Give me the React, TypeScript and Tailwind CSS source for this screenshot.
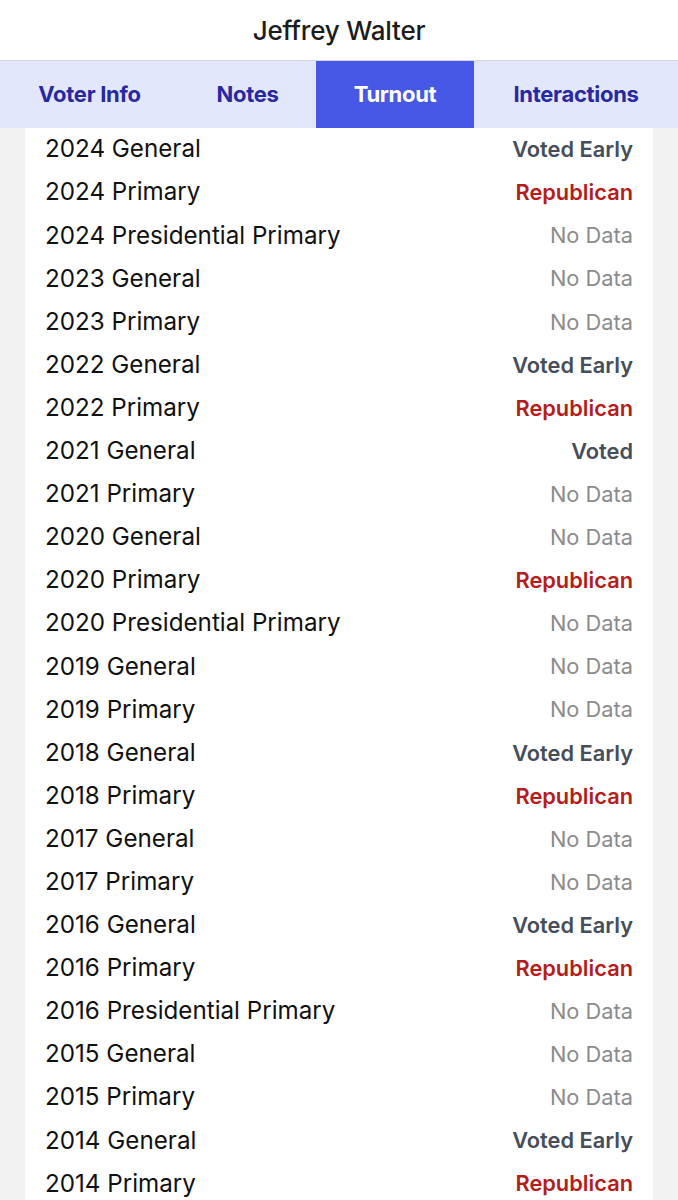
import React from 'react';

type Status = 'early' | 'rep' | 'none' | 'voted';

const rows: [string, Status][] = [
  ['2024 General', 'early'],
  ['2024 Primary', 'rep'],
  ['2024 Presidential Primary', 'none'],
  ['2023 General', 'none'],
  ['2023 Primary', 'none'],
  ['2022 General', 'early'],
  ['2022 Primary', 'rep'],
  ['2021 General', 'voted'],
  ['2021 Primary', 'none'],
  ['2020 General', 'none'],
  ['2020 Primary', 'rep'],
  ['2020 Presidential Primary', 'none'],
  ['2019 General', 'none'],
  ['2019 Primary', 'none'],
  ['2018 General', 'early'],
  ['2018 Primary', 'rep'],
  ['2017 General', 'none'],
  ['2017 Primary', 'none'],
  ['2016 General', 'early'],
  ['2016 Primary', 'rep'],
  ['2016 Presidential Primary', 'none'],
  ['2015 General', 'none'],
  ['2015 Primary', 'none'],
  ['2014 General', 'early'],
  ['2014 Primary', 'rep'],
];

const tabs = [
  { label: 'Voter Info', w: 'w-[179px]' },
  { label: 'Notes', w: 'w-[137px]' },
  { label: 'Turnout', w: 'w-[158px]', active: true },
  { label: 'Interactions', w: 'w-[204px]' },
];

const StatusText: React.FC<{ s: Status }> = ({ s }) => {
  switch (s) {
    case 'early':
      return <span className="font-semibold text-[#464e5c]">Voted Early</span>;
    case 'voted':
      return <span className="font-semibold text-[#464e5c]">Voted</span>;
    case 'rep':
      return <span className="font-semibold text-[#b71c1c]">Republican</span>;
    default:
      return <span className="text-[#8c8c8c]">No Data</span>;
  }
};

export default function App() {
  return (
    <div className="w-[678px] h-[1200px] overflow-hidden bg-[#f2f2f2] font-['Inter','Roboto',sans-serif]">
      {/* Header */}
      <header className="h-[61px] bg-white border-b border-[#d4d6e4] flex items-center justify-center">
        <h1 className="text-[26px] font-medium text-[#1c1c1c] tracking-[-0.2px] mt-[1px]">Jeffrey Walter</h1>
      </header>

      {/* Tabs */}
      <nav className="flex h-[67px] bg-[#e3e7fb]">
        {tabs.map((t) => (
          <div
            key={t.label}
            className={`${t.w} flex items-center justify-center text-[22px] font-bold tracking-[-0.3px] ${
              t.active ? 'bg-[#4757e6] text-white' : 'text-[#2828a4]'
            }`}
          >
            {t.label}
          </div>
        ))}
      </nav>

      {/* Turnout list */}
      <div className="mx-[25px] bg-white">
        {rows.map(([name, s]) => (
          <div key={name} className="h-[43.1px] flex items-center justify-between px-[20px]">
            <span className="text-[24.2px] text-[#111]">{name}</span>
            <span className="text-[21.8px]">
              <StatusText s={s} />
            </span>
          </div>
        ))}
      </div>
    </div>
  );
}
